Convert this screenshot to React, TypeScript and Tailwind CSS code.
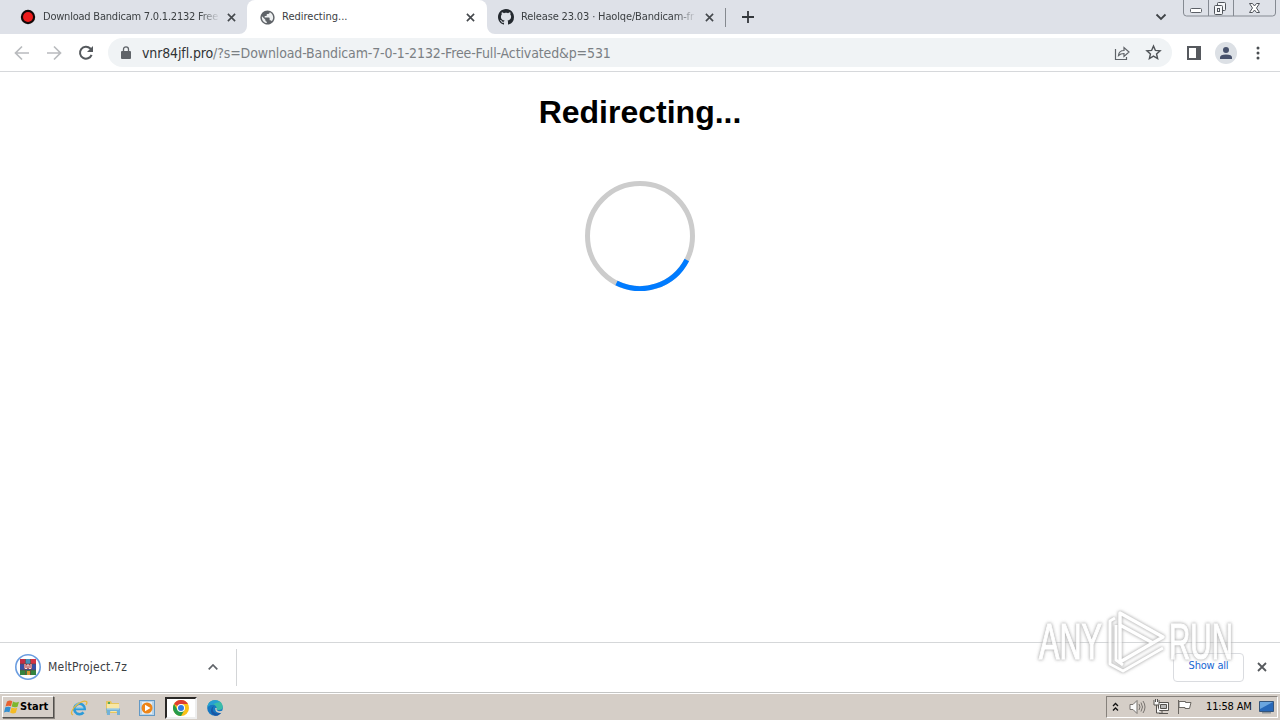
import React from 'react';
import { clsx } from 'clsx';

const uiFont = 'font-["DejaVu_Sans_Condensed","DejaVu_Sans",sans-serif]';

function CloseIcon({ className }: { className?: string }) {
  return (
    <svg viewBox="0 0 10 10" className={clsx('shrink-0', className)} fill="none" stroke="currentColor" strokeWidth="1.8">
      <path d="M1 1l8 8M9 1L1 9" />
    </svg>
  );
}

function RecordIcon() {
  return (
    <svg viewBox="0 0 16 16" className="size-4 shrink-0">
      <circle cx="8" cy="8" r="7.2" fill="#130808" />
      <circle cx="8" cy="8" r="5" fill="#ee1c1c" />
    </svg>
  );
}

function GlobeIcon() {
  return (
    <svg viewBox="0 0 24 24" className="size-[17px] shrink-0" fill="#5f6368">
      <path d="M12 2C6.48 2 2 6.48 2 12s4.480 10 10 10 10-4.480 10-10S17.520 2 12 2z" />
      <path d="M11 19.930c-3.950-.490-7-3.850-7-7.930 0-.620.080-1.210.210-1.790L9 15v1c0 1.100.900 2 2 2zM17.900 17.390c-.260-.810-1-1.390-1.900-1.390h-1v-3c0-.550-.450-1-1-1H8v-2h2c.550 0 1-.450 1-1V7h2c1.100 0 2-.900 2-2v-.410c2.930 1.190 5 4.060 5 7.410 0 2.080-.800 3.970-2.100 5.390z" fill="#eef0f1" />
    </svg>
  );
}

function GithubIcon() {
  return (
    <svg viewBox="0 0 16 16" className="size-4 shrink-0" fill="#24292f">
      <path d="M8 0C3.58 0 0 3.58 0 8c0 3.54 2.29 6.53 5.47 7.59.4.07.55-.17.55-.38 0-.19-.01-.82-.01-1.49-2.01.37-2.53-.49-2.69-.94-.09-.23-.48-.94-.82-1.13-.28-.15-.68-.52-.01-.53.63-.01 1.08.58 1.23.82.72 1.21 1.87.87 2.33.66.07-.52.28-.87.51-1.07-1.78-.2-3.64-.89-3.64-3.95 0-.87.31-1.59.82-2.15-.08-.2-.36-1.02.08-2.12 0 0 .67-.21 2.2.82.64-.18 1.32-.27 2-.27s1.36.09 2 .27c1.53-1.04 2.2-.82 2.2-.82.44 1.1.16 1.92.08 2.12.51.56.82 1.27.82 2.15 0 3.07-1.87 3.75-3.65 3.95.29.25.54.73.54 1.48 0 1.07-.01 1.93-.01 2.2 0 .21.15.46.55.38A8.01 8.01 0 0016 8c0-4.42-3.58-8-8-8z" />
    </svg>
  );
}

interface TabProps {
  title: string;
  icon: React.ReactNode;
  active?: boolean;
  className: string;
  titleClass: string;
}

function Tab({ title, icon, active, className, titleClass }: TabProps) {
  return (
    <div className={clsx('relative flex h-[34px] shrink-0 items-center', active && 'rounded-t-lg bg-white', className)}>
      {active && (
        <>
          <svg viewBox="0 0 8 8" className="absolute bottom-0 -left-2 size-2" fill="#fff"><path d="M8 0v8H0a8 8 0 0 0 8-8z" /></svg>
          <svg viewBox="0 0 8 8" className="absolute -right-2 bottom-0 size-2" fill="#fff"><path d="M0 0v8h8a8 8 0 0 1-8-8z" /></svg>
        </>
      )}
      {icon}
      <span className={clsx('overflow-hidden pt-px text-[11px] whitespace-nowrap text-[#3c4043]', titleClass)}>{title}</span>
      <CloseIcon className="ml-auto size-[9px] text-[#45494d]" />
    </div>
  );
}

function WindowControls() {
  return (
    <svg viewBox="0 0 94 18" className="absolute top-0 left-[1183px] h-[18px] w-[94px]" fill="none" stroke="#858a92">
      <path d="M.5 0v13q0 3 3 3h86q3 0 3-3V0M25.500 0v16M50.500 0v16" />
      <rect x="7.500" y="8.500" width="11" height="4" rx="1" fill="#fff" stroke="#5c6067" />
      <g stroke="#50545b" fill="#f5f6f8">
        <rect x="34.500" y="2.500" width="8" height="8" rx="1" />
        <rect x="31.500" y="5.500" width="8" height="9" rx="1" />
        <rect x="34.500" y="8.500" width="2" height="3" />
      </g>
      <path d="M66.500 3.500h3l2 2.500 2-2.500h3l-3 4.500 3 4.500h-3l-2-2.500-2 2.500h-3l3-4.500z" stroke="#50545b" fill="#fff" />
    </svg>
  );
}

function TabStrip() {
  return (
    <div className="relative flex h-[34px] items-center bg-[#dee1e8]">
      <Tab
        title="Download Bandicam 7.0.1.2132 Free"
        icon={<RecordIcon />}
        className="w-[247px] pr-[11px] pl-5"
        titleClass="ml-[7px] w-[177px] tracking-[-0.220px] [mask-image:linear-gradient(to_right,#000_88%,transparent)]"
      />
      <Tab title="Redirecting..." icon={<GlobeIcon />} active className="w-[240px] pr-3 pl-3" titleClass="ml-[6px]" />
      <Tab
        title="Release 23.03 · Haolqe/Bandicam-fr"
        icon={<GithubIcon />}
        className="w-[238px] pr-[11px] pl-[11px]"
        titleClass="ml-[7px] w-[176px] tracking-[-0.150px] [mask-image:linear-gradient(to_right,#000_88%,transparent)]"
      />
      <div className="h-[19px] w-px bg-[#85898f]" />
      <svg viewBox="0 0 12 12" className="ml-4 size-3" fill="none" stroke="#33373b" strokeWidth="1.800"><path d="M6 0v12M0 6h12" /></svg>
      <svg viewBox="0 0 12 8" className="ml-[401px] h-2 w-3" fill="none" stroke="#3f4347" strokeWidth="1.800"><path d="M1.500 1.500L6 6l4.500-4.500" /></svg>
      <WindowControls />
    </div>
  );
}

function Toolbar() {
  return (
    <div className="flex h-[38px] items-center border-b border-[#d6d8db] bg-white pl-[14px]">
      <svg viewBox="0 0 16 16" className="size-4" fill="none" stroke="#b9bbbe" strokeWidth="1.700"><path d="M15 8H2M8 1.500L1.500 8 8 14.500" /></svg>
      <svg viewBox="0 0 16 16" className="ml-4 size-4" fill="none" stroke="#b9bbbe" strokeWidth="1.700"><path d="M1 8h13M8 1.500L14.500 8 8 14.500" /></svg>
      <svg viewBox="0 0 16 16" className="ml-4 size-4" fill="none" stroke="#55595d" strokeWidth="2">
        <path d="M13.600 9.800A6 6 0 1 1 12.300 3.500L14 5.200" />
        <path d="M15 1v6H9z" fill="#55595d" stroke="none" />
      </svg>
      <div className="ml-[14px] flex h-[29px] w-[1064px] items-center rounded-full bg-[#f0f3f5] pr-[10px] pl-[13px]">
        <svg viewBox="0 0 10 13" className="h-[13px] w-[10px]" fill="#5f6368">
          <path d="M1 5h8q1 0 1 1v6q0 1-1 1H1q-1 0-1-1V6q0-1 1-1z" />
          <path d="M2.500 5V3.300a2.500 2.500 0 0 1 5 0V5" fill="none" stroke="#5f6368" strokeWidth="1.300" />
        </svg>
        <span className="ml-[11px] pt-px text-[14px] tracking-[-0.130px] whitespace-nowrap text-[#7b8084]">
          <span className="text-[#303336]">vnr84jfl.pro</span>/?s=Download-Bandicam-7-0-1-2132-Free-Full-Activated&amp;p=531
        </span>
        <svg viewBox="0 0 16 16" className="ml-auto size-4" fill="none" stroke="#5f6368" strokeWidth="1.200">
          <path d="M1.500 4v10.500h11V12M4.500 10.500q.5-5 5.500-5v-3l5 4.500-5 4.500V8.500q-3.500 0-5.500 2z" />
        </svg>
        <svg viewBox="0 0 24 24" className="ml-[15px] size-[17px]" fill="none" stroke="#4f5357" strokeWidth="2">
          <path d="M12 3l2.700 6.100 6.600.6-5 4.400 1.500 6.500-5.800-3.400-5.800 3.400 1.500-6.500-5-4.400 6.600-.6z" />
        </svg>
      </div>
      <svg viewBox="0 0 14 14" className="ml-[15px] size-[14px]"><path d="M0 0h14v14H0zM2 2v10h7V2z" fill="#56595e" fillRule="evenodd" /></svg>
      <svg viewBox="0 0 22 22" className="ml-[14px] size-[22px]">
        <circle cx="11" cy="11" r="11" fill="#dce0e5" />
        <path d="M11 5a3 3 0 1 1 0 6 3 3 0 0 1 0-6zM5 17v-1.500q0-3 6-3t6 3V17z" fill="#47516b" />
      </svg>
      <svg viewBox="0 0 4 14" className="ml-[19px] h-[14px] w-1" fill="#4a4e52"><circle cx="2" cy="2" r="1.500" /><circle cx="2" cy="7" r="1.500" /><circle cx="2" cy="12" r="1.500" /></svg>
    </div>
  );
}

function Page() {
  return (
    <main className="flex h-[570px] flex-col items-center bg-white">
      <h1 className='mt-[22px] h-[37px] font-["Liberation_Sans",Arial,sans-serif] text-[32px] leading-[37px] font-bold text-black'>
        Redirecting...
      </h1>
      <svg viewBox="0 0 110 110" className="mt-[50px] size-[110px]" fill="none" strokeWidth="5">
        <circle cx="55" cy="55" r="52.500" stroke="#ccc" />
        <path d="M101.800 79A52.500 52.500 0 0 1 31.500 102" stroke="#007bff" />
      </svg>
    </main>
  );
}

function ArchiveIcon() {
  return (
    <svg viewBox="0 0 26 26" className="size-[26px]">
      <circle cx="13" cy="13" r="12.200" fill="#fff" stroke="#6b9de0" strokeWidth="1.600" />
      <path d="M5 5h5v5H5z" fill="#c42d45" />
      <path d="M10 5h6v5h-6z" fill="#478fba" />
      <path d="M16 5h5v5h-5z" fill="#d43344" />
      <path d="M5 10h16v6H5z" fill="#394fa5" />
      <path d="M5 16h16v5H5z" fill="#348340" />
      <path d="M10.500 5v16M15.500 5v16" stroke="#7a4434" strokeWidth=".7" />
      <path d="M5 10h16M5 16h16" stroke="#54484d" strokeWidth=".7" />
      <path d="M9 10h8v5H9z" fill="#a33139" />
      <path d="M10 10v4.500h2V11h2v3.500h2V10" fill="none" stroke="#f4dfe2" />
      <path d="M12 17h3v4h-3z" fill="#d89735" />
    </svg>
  );
}

function DownloadBar() {
  return (
    <div className="flex h-[51px] items-center border-t border-[#d5d7d9] bg-white pb-[2px] pl-[15px]">
      <ArchiveIcon />
      <span className="ml-[7px] w-[160px] text-[12px] tracking-[0.220px] text-[#3c4043]">MeltProject.7z</span>
      <svg viewBox="0 0 10 6" className="h-[6px] w-[10px]" fill="none" stroke="#5f6368" strokeWidth="1.700"><path d="M.7 5.300L5 1l4.300 4.300" /></svg>
      <div className="ml-[18px] h-[37px] w-px bg-[#d3d5d7]" />
      <div className="ml-auto flex h-[29px] w-[71px] items-center justify-center rounded-[4px] border border-[#dadce0] pb-px text-[11px] tracking-[-0.200px] text-[#1967d2]">
        Show all
      </div>
      <CloseIcon className="mr-[13px] ml-[13px] size-[10px] text-[#56595d]" />
    </div>
  );
}

function WindowsFlag() {
  return (
    <svg viewBox="0 0 16 16" className="size-4">
      <path d="M3 2.500Q6 .7 8.300 2.300L7 7.300Q4.500 6 1.500 7.500z" fill="#e86230" />
      <path d="M9 2.500q3 1.700 6 .2l-1.500 5q-3 1.300-5.800-.2z" fill="#7db72e" />
      <path d="M1.300 8.300Q4.300 7 6.800 8.300L5.400 13.200Q2.800 12 0 13.400z" fill="#348fd0" />
      <path d="M7.500 8.500q2.800 1.500 5.800.3l-1.500 5q-3 1.300-5.700-.3z" fill="#f4bb25" />
    </svg>
  );
}

function ExplorerIcon() {
  return (
    <svg viewBox="0 0 18 18" className="size-[18px]" fill="none">
      <path d="M4.500 10h10.200a5.200 5.200 0 1 0-1.200 3.300" stroke="#2d9bd9" strokeWidth="2.600" />
      <path d="M5.500 9h8M5 6.500q1.500-2 4-2" stroke="#8dd3f2" />
      <path d="M3 16Q-.5 15 4 8.500 12 .5 16.500 2.500q1 1-.5 3.500" stroke="#e5b83d" strokeWidth="1.300" />
    </svg>
  );
}

function FolderIcon() {
  return (
    <svg viewBox="0 0 16 16" className="size-4">
      <path d="M1 1h5l1 2h7v10H1z" fill="#e6c65f" />
      <path d="M2 4h12v8H2z" fill="#f8e7a4" />
      <path d="M3 2h2v2H3z" fill="#58a858" />
      <path d="M1 8.500h14V15h-3v-3q0-1-1-1H6q-1 0-1 1v3H2z" fill="#73b2d8" />
      <path d="M2 9h12" stroke="#b5dbec" />
    </svg>
  );
}

function MediaIcon() {
  return (
    <svg viewBox="0 0 16 16" className="size-4">
      <rect x=".5" y=".5" width="15" height="15" fill="#b9d4e9" stroke="#6399c5" />
      <path d="M3 2h10v12H3z" fill="#e4eef4" />
      <circle cx="8" cy="8" r="5.500" fill="#ee8517" />
      <path d="M6 4.800v6.400L11.500 8z" fill="#fff" />
    </svg>
  );
}

function ChromeIcon() {
  return (
    <svg viewBox="0 0 16 16" className="size-4">
      <circle cx="8" cy="8" r="8" fill="#fbc116" />
      <path d="M8 8L1.070 4A8 8 0 0 1 14.930 4H8z" fill="#df3d31" />
      <path d="M1.070 4A8 8 0 0 0 8 16l3.460-6L8 8 4.540 10z" fill="#279b4b" />
      <circle cx="8" cy="8" r="4" fill="#fff" />
      <circle cx="8" cy="8" r="3" fill="#337be3" />
    </svg>
  );
}

function EdgeIcon() {
  return (
    <svg viewBox="0 0 16 16" className="size-4">
      <circle cx="8" cy="8" r="7.800" fill="#1677c2" />
      <path d="M.3 7Q1.500.2 8 .2q7.500.3 7.800 6.800 0 3-4 3-2.500 0-2-1.500Q9 4.500 5.500 4.500 2.500 4.500.3 7z" fill="#3abca9" />
      <path d="M.3 7Q1.500.2 8 .2q3 0 5 1.700Q9 2 6 4.500 2.500 4.500.3 7z" fill="#279fd4" />
      <path d="M7 6q-3 4 .5 6.500 3 2 7-.3Q12 16 8 15.800 3.500 14 4 10q.5-3 3-4z" fill="#1856a5" />
      <path d="M9.800 8q-1 3 2 3.200 2 .3 5-1v2q-2 1-4 .8-5-.5-4.500-5z" fill="#d4cec6" />
    </svg>
  );
}

function Tray() {
  return (
    <div className="ml-auto flex h-[22px] w-[172px] items-center border border-t-[#86817b] border-r-white border-b-white border-l-[#86817b] pl-[5px]">
      <svg viewBox="0 0 7 11" className="h-[11px] w-[7px]" fill="none" stroke="#111" strokeWidth="1.300"><path d="M1 4l2.500-2.500L6 4M1 8.500L3.500 6 6 8.500" /></svg>
      <svg viewBox="0 0 17 16" className="ml-[10px] h-4 w-[17px]" fill="none" stroke="#77736f">
        <path d="M1 5.500h3l4-4v13l-4-4H1z" fill="#fafafa" />
        <path d="M10 5q2 3 0 6M12 3.500q3 4.500 0 9M14 2q4 6 0 12" />
      </svg>
      <svg viewBox="0 0 16 16" className="ml-[7px] size-4" fill="#f8f8f8" stroke="#55524f">
        <path d="M5.500 3.500h10v8h-10zM9 12v2M6 14.500h9" />
        <path d="M7.500 5.500h6v4h-6z" fill="#b8b8b8" />
        <path d="M1 1v5h5V1M3.500 6v8h4M2.500 0v3M4.500 0v3" />
      </svg>
      <svg viewBox="0 0 16 16" className="ml-[7px] size-4" fill="#fff" stroke="#6b6762">
        <path d="M2.500 1v14M3 2.500h6.500v1h5.500l-1.500 6H9v-1H3z" />
      </svg>
      <span className="ml-[14px] w-[53px] text-[11px] tracking-[-0.150px] whitespace-nowrap text-black">11:58 AM</span>
      <svg viewBox="0 0 15 13" className="h-[13px] w-[15px]">
        <path d="M.5.5h14v10H.5z" fill="#2768b9" stroke="#34557c" />
        <path d="M1 1h13L1 8z" fill="#6aa5df" />
        <path d="M3 11h9v1.500H3z" fill="#8d9499" />
      </svg>
    </div>
  );
}

function Taskbar() {
  return (
    <div className="relative flex h-[27px] items-center border-t border-white bg-[#d5cec7] pr-[2px] pl-[2px] shadow-[0_-1px_#c4c5c4]">
      <div className="flex h-[22px] w-[52px] items-center border border-t-white border-r-[#53504d] border-b-[#53504d] border-l-white pl-px shadow-[1px_1px_#8a857f]">
        <WindowsFlag />
        <span className="text-[11px] font-bold tracking-[0.050px] text-black">Start</span>
      </div>
      <div className="ml-4 flex items-center pt-px">
        <ExplorerIcon />
        <div className="ml-[17px]"><FolderIcon /></div>
        <div className="ml-[18px]"><MediaIcon /></div>
        <div className="ml-[10px] flex h-[22px] w-8 items-center justify-center border-2 border-t-[#292725] border-r-[#eee] border-b-[#eee] border-l-[#292725] bg-white">
          <ChromeIcon />
        </div>
        <div className="ml-[10px]"><EdgeIcon /></div>
      </div>
      <Tray />
    </div>
  );
}

function Watermark() {
  return (
    <svg viewBox="0 0 220 76" className="pointer-events-none absolute top-[604px] left-[1030px] h-[76px] w-[220px] opacity-75 [filter:drop-shadow(0_0_1.5px_#999)_drop-shadow(0_0_1.5px_#ccc)]">
      <g fill="#fff" stroke="#fff" strokeWidth="1.200" className='font-["Liberation_Sans",Arial,sans-serif] text-[50px]'>
        <text x="9" y="55" textLength="63" lengthAdjust="spacingAndGlyphs">ANY</text>
        <text x="139" y="55" textLength="64" lengthAdjust="spacingAndGlyphs">RUN</text>
      </g>
      <g fill="none" stroke="#fff" strokeWidth="3.500" strokeLinejoin="round">
        <path d="M90 52V9l43 24-43 25v-7M90 21l33 18" />
        <path d="M85 14l-5 3v43l13 7 40-23M86 21v35l7 5" strokeWidth="3" />
      </g>
    </svg>
  );
}

export default function App() {
  return (
    <div className={clsx('relative h-[720px] w-[1280px] overflow-hidden bg-white', uiFont)}>
      <TabStrip />
      <Toolbar />
      <Page />
      <DownloadBar />
      <Taskbar />
      <Watermark />
    </div>
  );
}
